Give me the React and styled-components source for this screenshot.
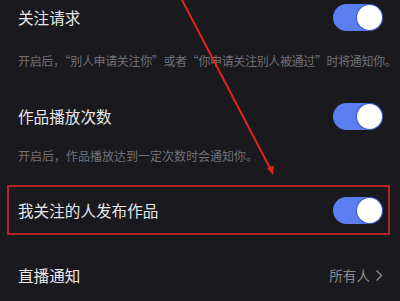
import React from 'react';
import styled, { createGlobalStyle } from 'styled-components';

const GlobalStyle = createGlobalStyle`
  html, body {
    margin: 0;
    padding: 0;
    background: #1a191e;
  }
  body {
    font-family: "Noto Sans CJK SC", "Noto Sans", sans-serif;
  }
`;

const Page = styled.div`
  position: relative;
  width: 400px;
  height: 301px;
  overflow: hidden;
  background: #1a191e;
`;

const Row = styled.div`
  display: flex;
  align-items: center;
  justify-content: space-between;
  height: ${(p) => p.h || 34}px;
  padding: ${(p) => (p.boxed ? '0 5px 0 9px' : '0 17px 0 18px')};
  margin-top: ${(p) => p.mt || 0}px;
`;

const Title = styled.div`
  font-size: 15.6px;
  color: #e6e6e8;
  line-height: 20px;
`;

const Desc = styled.div`
  font-size: 12px;
  letter-spacing: ${(p) => (p.tight ? '-0.35px' : '0')};
  color: #717176;
  line-height: 20px;
  padding-left: 18px;
  margin-top: ${(p) => p.mt || 0}px;
  white-space: nowrap;
`;

const Highlight = styled.div`
  margin: ${(p) => p.mt || 0}px 10px 0 7px;
  border: 2px solid #b3242a;
`;

const Track = styled.div`
  width: 50px;
  height: 27px;
  border-radius: 14px;
  background: #5b7ff0;
  display: flex;
  align-items: center;
  justify-content: flex-end;
  padding: 0 1px;
  box-sizing: border-box;
`;

const Knob = styled.div`
  width: 25px;
  height: 25px;
  border-radius: 50%;
  background: #ffffff;
  box-shadow: 0 0 1px 1px rgba(40, 60, 160, 0.6);
`;

const Value = styled.div`
  display: flex;
  align-items: center;
  gap: 5px;
  font-size: 13.6px;
  color: #8a8a8e;
`;

const Arrow = styled.svg`
  position: absolute;
  left: 0;
  top: 0;
  pointer-events: none;
`;

const Toggle = () => (
  <Track>
    <Knob />
  </Track>
);

export default function App() {
  return (
    <Page>
      <GlobalStyle />
      <Row>
        <Title>关注请求</Title>
        <Toggle />
      </Row>
      <Desc tight mt={17}>开启后，“别人申请关注你”或者“你申请关注别人被通过”时将通知你。</Desc>
      <Row mt={28}>
        <Title>作品播放次数</Title>
        <Toggle />
      </Row>
      <Desc mt={13}>开启后，作品播放达到一定次数时会通知你。</Desc>
      <Highlight mt={19}>
        <Row boxed h={46}>
          <Title>我关注的人发布作品</Title>
          <Toggle />
        </Row>
      </Highlight>
      <Row mt={23}>
        <Title>直播通知</Title>
        <Value>
          所有人
          <svg width="8" height="13" viewBox="0 0 8 13">
            <path d="M1.5 1.5 L6.5 6.5 L1.5 11.5" fill="none" stroke="#8a8a8e" strokeWidth="1.4" />
          </svg>
        </Value>
      </Row>
      <Arrow width="400" height="301" viewBox="0 0 400 301">
        <line x1="181" y1="-2" x2="271" y2="170" stroke="#e3221c" strokeWidth="2" />
        <path d="M273 175 L267 168 L274 165.5 Z" fill="#e3221c" />
      </Arrow>
    </Page>
  );
}
